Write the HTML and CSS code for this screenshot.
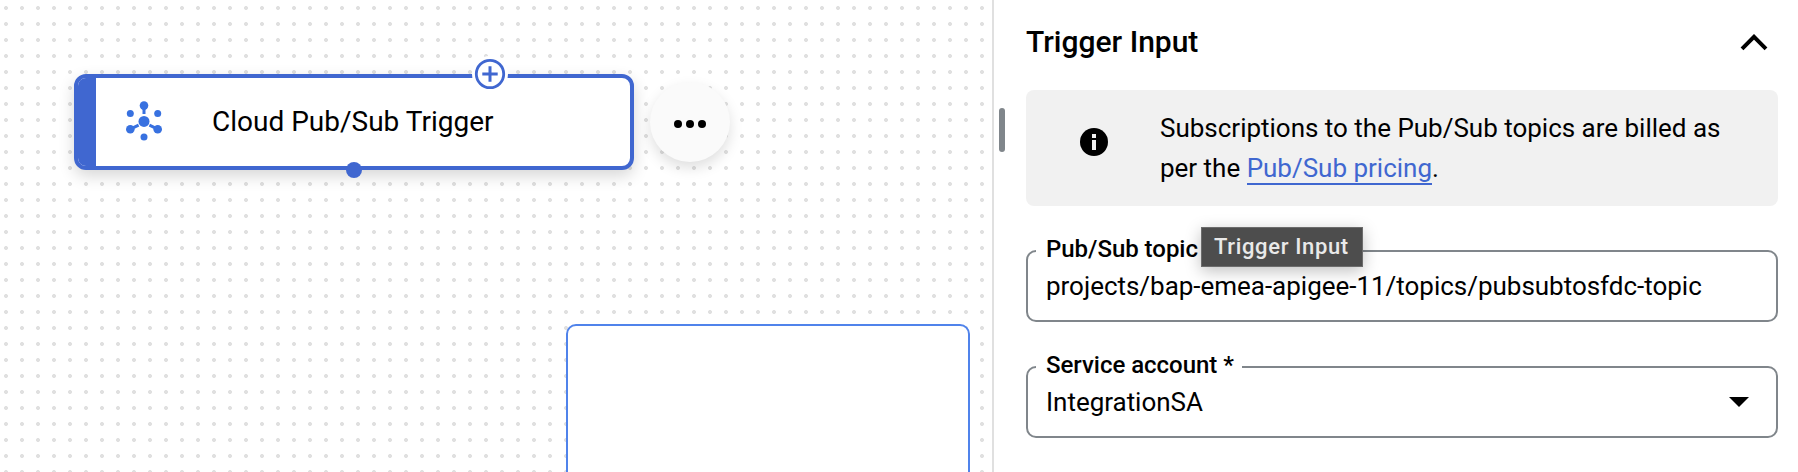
FILE: index.html
```html
<!DOCTYPE html>
<html lang="en">
<head>
<meta charset="utf-8">
<title>Trigger Input</title>
<link rel="stylesheet" href="styles.css">
</head>
<body>
<main class="app">
  <section class="canvas">
    <div class="node">
      <span class="node-bar"></span>
      <svg class="node-icon" viewBox="0 0 36 40" width="36" height="40">
        <g stroke="#3871e0" stroke-width="3" fill="none"><path d="M18 4.500V13M12.600 24.200 4.300 28.200M23.400 24.200 31.700 28.200"/></g>
        <g fill="#3871e0"><circle cx="18" cy="20.400" r="5.500"/><circle cx="18" cy="4.600" r="4.300"/><circle cx="4.300" cy="28.200" r="4.300"/><circle cx="31.700" cy="28.200" r="4.300"/><circle cx="4.300" cy="12.500" r="3.500"/><circle cx="31.700" cy="12.500" r="3.500"/><circle cx="18" cy="36" r="3.500"/></g>
      </svg>
      <span class="node-title">Cloud Pub/Sub Trigger</span>
      <svg class="node-add" viewBox="0 0 36 36" width="36" height="36">
        <circle cx="18" cy="18" r="18" fill="#fff"/>
        <circle cx="18" cy="18" r="13.700" fill="#fff" stroke="#4067d0" stroke-width="2.800"/>
        <path d="M18 10.300V25.700M10.300 18H25.700" stroke="#4067d0" stroke-width="3"/>
      </svg>
      <span class="node-port"></span>
    </div>
    <button class="node-menu" aria-label="More actions">
      <svg viewBox="0 0 32 8" width="32" height="8"><circle cx="4" cy="4" r="4"/><circle cx="16" cy="4" r="4"/><circle cx="28" cy="4" r="4"/></svg>
    </button>
    <div class="minimap"></div>
  </section>
  <aside class="panel">
    <span class="resize-handle"></span>
    <header class="panel-header">
      <h2 class="panel-title">Trigger Input</h2>
      <svg class="chevron" viewBox="0 0 28 17" width="28" height="17"><path d="M2 14.800 14 2.800 26 14.800" fill="none" stroke="#000" stroke-width="4"/></svg>
    </header>
    <div class="notice">
      <svg class="info" viewBox="0 0 28 28" width="28" height="28"><circle cx="14" cy="14" r="14"/><path d="M12 6h4v4h-4zM12 12h4v10h-4z" fill="#f1f1f1"/></svg>
      <p class="notice-text">Subscriptions to the Pub/Sub topics are billed as<br>per the <a class="link" href="#">Pub/Sub pricing</a>.</p>
    </div>
    <div class="field">
      <label class="field-label">Pub/Sub topic</label>
      <span class="field-value">projects/bap-emea-apigee-11/topics/pubsubtosfdc-topic</span>
      <span class="tooltip">Trigger Input</span>
    </div>
    <div class="field">
      <label class="field-label">Service account *</label>
      <span class="field-value">IntegrationSA</span>
      <svg class="caret" viewBox="0 0 20 10" width="20" height="10"><path d="M0 0h20L10 10z"/></svg>
    </div>
  </aside>
</main>
</body>
</html>
```
FILE: styles.css
```css
body { margin: 0; background: #fff; color: #000; font-family: Roboto, sans-serif; }
.app { display: flex; width: 1798px; height: 472px; overflow: hidden; }
.canvas { position: relative; flex: 0 0 992px; background: radial-gradient(circle at 8px 8px, #e0e0e0 1.600px, rgba(224,224,224,0) 2.300px) -2px 0 / 16px 16px; }
.node { position: absolute; left: 74px; top: 74px; box-sizing: border-box; width: 560px; height: 96px; border: 4px solid #4067d0; border-radius: 12px; background: #fff; box-shadow: 0 6px 16px rgba(0,0,0,.16); display: flex; align-items: center; }
.node-bar { align-self: stretch; width: 18px; border-radius: 8px 0 0 8px; background: #4067d0; }
.node-icon { margin: 0 0 2px 29.500px; }
.node-title { margin: 0 0 2px 50.500px; font-size: 28px; white-space: nowrap; }
.node-add { position: absolute; left: 394px; top: -22px; }
.node-port { position: absolute; left: 268px; top: 84px; width: 16px; height: 16px; border-radius: 50%; background: #4067d0; }
.node-menu { position: absolute; left: 650px; top: 82px; width: 80px; height: 80px; padding: 4px 0 0; border: 0; border-radius: 50%; background: #fafafa; box-shadow: 0 6px 14px rgba(0,0,0,.13); display: flex; align-items: center; justify-content: center; }
.minimap { position: absolute; left: 566px; top: 324px; box-sizing: border-box; width: 404px; height: 200px; border: 2px solid #5083eb; border-radius: 10px; background: #fff; }
.panel { position: relative; flex: 1; box-sizing: border-box; padding: 0 20px 0 32px; border-left: 2px solid #e0e0e0; background: #fff; }
.resize-handle { position: absolute; left: 5px; top: 108px; width: 6px; height: 44px; border-radius: 3px; background: #80868b; }
.panel-header { display: flex; justify-content: space-between; height: 90px; padding-right: 10px; }
.panel-title { margin: 25px 0 0; font-size: 30px; line-height: 34px; font-weight: 500; white-space: nowrap; }
.chevron { margin-top: 34px; }
.notice { display: flex; box-sizing: border-box; height: 116px; padding: 18px 0 0 54px; border-radius: 8px; background: #f1f1f1; }
.info { flex: none; margin-top: 20px; }
.notice-text { margin: 0 0 0 52px; font-size: 26px; line-height: 40px; letter-spacing: -.01px; white-space: nowrap; }
.link { color: #4067d0; text-decoration: none; border-bottom: 2px solid #4067d0; }
.field { position: relative; display: flex; justify-content: space-between; box-sizing: border-box; height: 72px; margin-top: 44px; padding: 0 27px 0 18px; border: 2px solid #80868b; border-radius: 10px; }
.field-label { position: absolute; left: 8px; top: -19px; padding: 0 8px 0 10px; background: #fff; font-size: 24px; line-height: 32px; font-weight: 500; letter-spacing: -.03px; white-space: nowrap; }
.field-value { margin-top: 16px; font-size: 26px; line-height: 36px; letter-spacing: -.02px; white-space: nowrap; }
.caret { margin-top: 29px; }
.tooltip { position: absolute; left: 173px; top: -25px; box-sizing: border-box; width: 162px; height: 40px; padding-left: 12px; border: 1px solid #6c6c6c; background: #4d4d4d; color: #e9e9e9; font-size: 22px; font-weight: 500; line-height: 38px; letter-spacing: .65px; white-space: nowrap; box-shadow: 0 4px 16px rgba(0,0,0,.25); }
```
